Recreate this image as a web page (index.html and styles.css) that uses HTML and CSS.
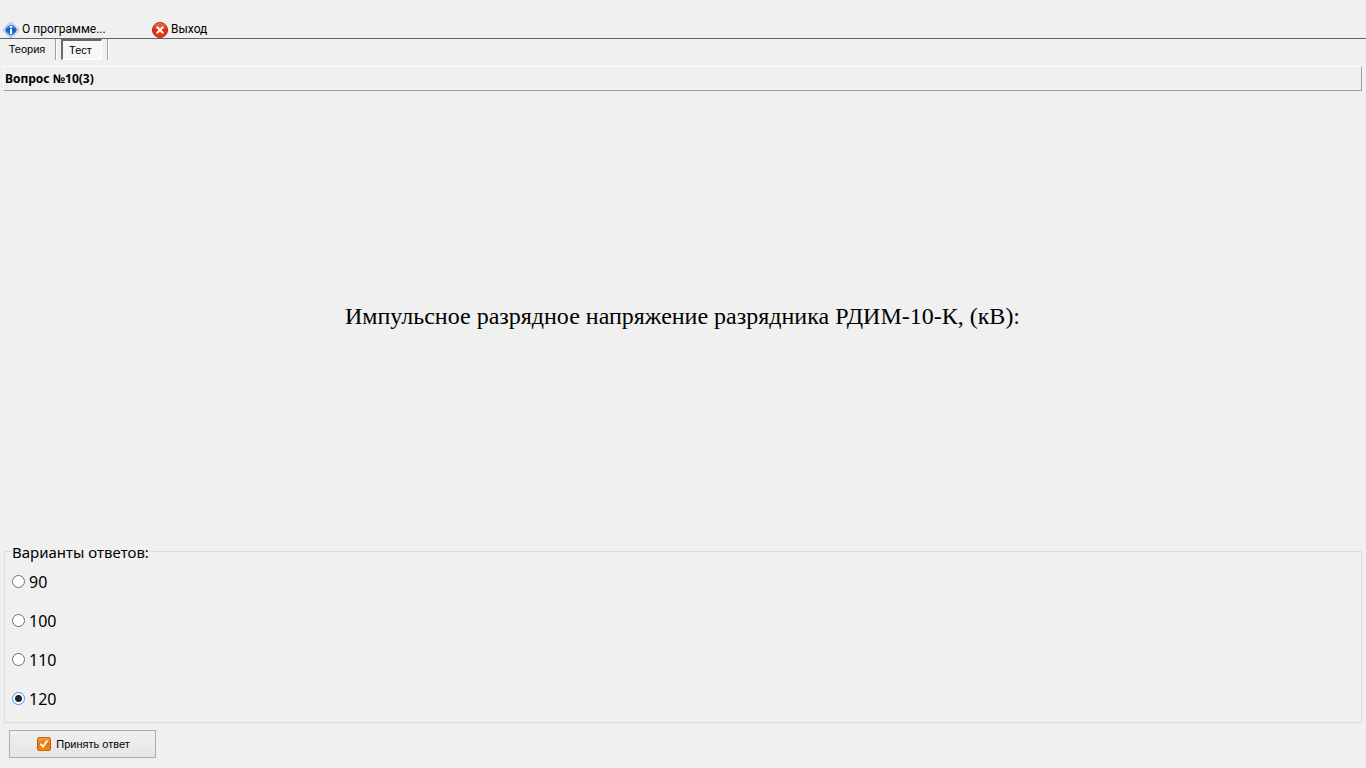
FILE: index.html
```
<!DOCTYPE html>
<html lang="ru">
<head>
<meta charset="utf-8">
<title>Тест</title>
<link rel="stylesheet" href="styles.css">
</head>
<body>
<nav class="menu">
  <button class="menu-item menu-about" type="button">
    <svg class="icon" viewBox="0 0 16 16" aria-hidden="true">
      <defs><linearGradient id="blue" x1="0" y1="0" x2="0" y2="1"><stop offset="0" stop-color="#6fa5ee"/><stop offset="0.5" stop-color="#1457c4"/><stop offset="1" stop-color="#3c9af5"/></linearGradient></defs>
      <path d="M6.6 1Q8 -.2 9.4 1L15 6.6Q16.2 8 15 9.4L9.4 15Q8 16.2 6.6 15L1 9.4Q-.2 8 1 6.6Z" fill="#d3def2" stroke="#9db0d4" stroke-width=".8"/>
      <path d="M8 2.2Q12.4 3.8 13.8 8Q12.2 12.2 8 13.8Q3.8 12.2 2.2 8Q3.8 3.8 8 2.2Z" fill="url(#blue)"/>
      <path d="M7 4h2v2H7zM7 7h2v5H7z" fill="#fff"/>
    </svg>
    <span>О программе...</span>
  </button>
  <button class="menu-item" type="button">
    <svg class="icon" viewBox="0 0 16 16" aria-hidden="true">
      <defs><linearGradient id="red" x1="0" y1="0" x2="0" y2="1"><stop offset="0" stop-color="#f17a5c"/><stop offset="0.5" stop-color="#e02e0e"/><stop offset="1" stop-color="#f03a12"/></linearGradient></defs>
      <circle cx="8" cy="8" r="7.5" fill="url(#red)" stroke="#b32413"/>
      <path d="M4.8 4.8L11.2 11.2M11.2 4.8L4.8 11.2" stroke="#fff" stroke-width="2"/>
    </svg>
    <span>Выход</span>
  </button>
</nav>
<div class="tabs" role="tablist">
  <button class="tab" type="button" role="tab" aria-selected="false">Теория</button>
  <span class="divider"></span>
  <button class="tab tab-active" type="button" role="tab" aria-selected="true">Тест</button>
  <span class="divider"></span>
</div>
<main class="test">
  <h1 class="number">Вопрос №10(3)</h1>
  <p class="question">Импульсное разрядное напряжение разрядника РДИМ-10-К, (кВ):</p>
  <form class="form">
    <fieldset class="answers">
      <legend class="legend">Варианты ответов:</legend>
      <label class="answer"><input class="radio" type="radio" name="answer" value="90">90</label>
      <label class="answer"><input class="radio" type="radio" name="answer" value="100">100</label>
      <label class="answer"><input class="radio" type="radio" name="answer" value="110">110</label>
      <label class="answer"><input class="radio" type="radio" name="answer" value="120" checked>120</label>
    </fieldset>
    <button class="submit" type="button">
      <svg class="check" viewBox="0 0 14 14" aria-hidden="true">
        <defs><linearGradient id="orange" x1="0" y1="0" x2="0" y2="1"><stop offset="0" stop-color="#f3a04c"/><stop offset="0.5" stop-color="#e87208"/><stop offset="1" stop-color="#fa8a10"/></linearGradient></defs>
        <rect x=".5" y=".5" width="13" height="13" rx="1.5" fill="url(#orange)" stroke="#c0641a"/>
        <path d="M3.4 6.6L6 9.8L10.4 3.4" fill="none" stroke="#fff" stroke-width="1.8"/>
      </svg>
      <span>Принять ответ</span>
    </button>
  </form>
</main>
</body>
</html>
```
FILE: styles.css
```
* {
  box-sizing: border-box;
}

body {
  margin: 0;
  min-height: 100vh;
  display: flex;
  flex-direction: column;
  background: #f0f0f0;
  color: #000;
  font: 12px/16px Roboto, "Noto Sans", sans-serif;
}

button {
  margin: 0;
  padding: 0;
  border: 0;
  background: none;
  color: inherit;
  font: inherit;
}

.menu {
  display: flex;
  padding: 22px 3px 0;
  border-bottom: 1px solid #646464;
}

.menu-item {
  display: flex;
  align-items: center;
  gap: 3px;
  height: 16px;
}

.menu-item span {
  line-height: 14px;
  padding-bottom: 2px;
}

.menu-about {
  width: 149px;
}

.icon {
  width: 16px;
  height: 16px;
}

.tabs {
  display: flex;
  height: 21px;
  font: 11px/14px "Liberation Sans", Arial, sans-serif;
}

.tab {
  width: 55px;
  padding: 0 1px 1px 0;
}

.divider {
  width: 2px;
  border-left: 1px solid #a0a0a0;
  border-right: 1px solid #fff;
}

.tab-active {
  width: 41px;
  margin: 0 5px 0 4px;
  padding: 0 3px 0 0;
  border: 1px solid;
  border-width: 2px 1px 1px 2px;
  border-color: #696969 #fff #fff #696969;
  background: repeating-conic-gradient(#fff 0 25%, #f0f0f0 0 50%) 0 0 / 2px 2px;
}

.test {
  flex: 1;
  display: flex;
  flex-direction: column;
  padding: 6px 4px 10px 3px;
}

.number {
  margin: 0;
  height: 25px;
  padding: 0 1px;
  border: 1px solid;
  border-color: #fff #a0a0a0 #a0a0a0 #fff;
  font: bold 12px/24px "Noto Sans", sans-serif;
}

.question {
  flex: 1;
  display: flex;
  align-items: center;
  justify-content: center;
  margin: 0;
  padding-top: 2px;
  font: 24px/28px "Liberation Serif", "Times New Roman", serif;
}

.form {
  padding-left: 1px;
}

.answers {
  display: flex;
  flex-direction: column;
  gap: 17px;
  min-width: 0;
  margin: 0 0 7px;
  padding: 8px 7px 12px;
  border: 1px solid #dcdcdc;
  font: 16px/22px "Noto Sans", sans-serif;
}

.legend {
  padding: 2px 1px 0 0;
  font-size: 15px;
}

.answer {
  display: flex;
  align-items: center;
  gap: 4px;
}

.radio {
  appearance: none;
  width: 13px;
  height: 13px;
  margin: 0 0 1px;
  border: 1px solid #707070;
  border-radius: 50%;
  background: #fff;
}

.radio:checked {
  border-color: #3399ff;
  background: radial-gradient(circle, #222 0 3px, #fff 4px);
}

.submit {
  display: flex;
  align-items: center;
  justify-content: center;
  gap: 5px;
  width: 147px;
  height: 28px;
  padding-left: 2px;
  margin-left: 5px;
  border: 1px solid #acacac;
  background: linear-gradient(#f0f0f0, #e5e5e5);
  font: 11px/14px "Liberation Sans", Arial, sans-serif;
}

.check {
  width: 14px;
  height: 14px;
}
```
